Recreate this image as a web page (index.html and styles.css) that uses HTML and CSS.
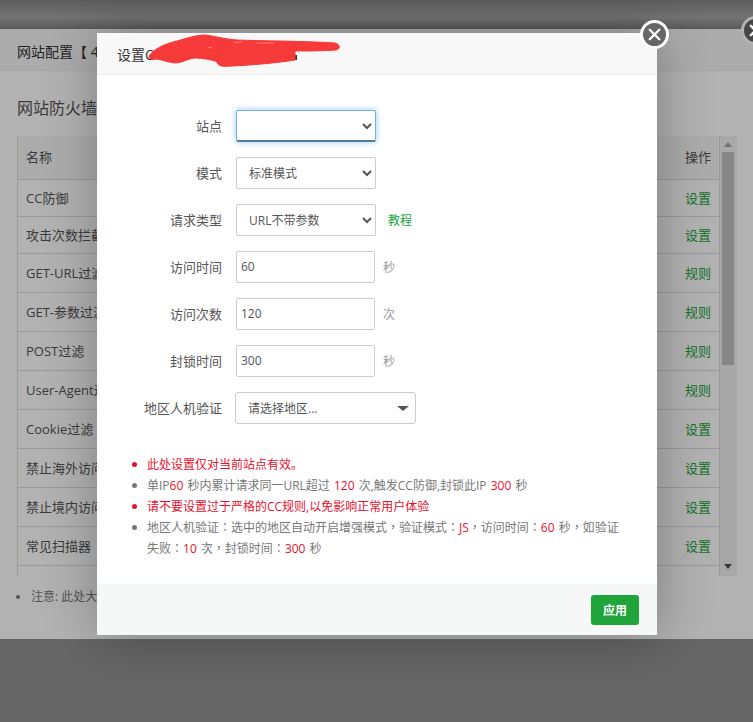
FILE: index.html
```html
<!DOCTYPE html>
<html lang="zh-CN">
<head>
<meta charset="utf-8">
<title>设置</title>
<link rel="stylesheet" href="styles.css">
</head>
<body>
<div class="page">
  <div class="top-band"></div>
  <section class="panel">
    <header class="panel-title">网站配置【 4</header>
    <div class="panel-body">
      <h2 class="section-title">网站防火墙</h2>
      <div class="table-wrap">
        <div class="table">
          <div class="row head"><span>名称</span><span>操作</span></div>
          <div class="row short"><span>CC防御</span><a>设置</a></div>
          <div class="row short"><span>攻击次数拦截</span><a>设置</a></div>
          <div class="row"><span>GET-URL过滤</span><a>规则</a></div>
          <div class="row"><span>GET-参数过滤</span><a>规则</a></div>
          <div class="row"><span>POST过滤</span><a>规则</a></div>
          <div class="row"><span>User-Agent过滤</span><a>规则</a></div>
          <div class="row"><span>Cookie过滤</span><a>设置</a></div>
          <div class="row"><span>禁止海外访问</span><a>设置</a></div>
          <div class="row"><span>禁止境内访问</span><a>设置</a></div>
          <div class="row"><span>常见扫描器</span><a>设置</a></div>
        </div>
        <div class="scrollbar">
          <i class="arrow-up"></i>
          <b class="thumb"></b>
          <i class="arrow-down"></i>
        </div>
      </div>
      <ul class="panel-note"><li>注意: 此处大</li></ul>
    </div>
  </section>
  <div class="page-rest"></div>
</div>

<div class="veil"></div>
<span class="close close-back"><svg viewBox="0 0 24 24"><path d="M7 7l10 10M17 7L7 17"/></svg></span>

<div class="dialog">
  <header class="dialog-title">设置C</header>
  <svg class="scribble" viewBox="0 0 200 40" width="200" height="40">
    <path class="speck" d="M150 22h5v5h-5zM55 15h5v5h-5z"/>
    <path class="ink" d="M7 23C12 16 22 11 35 8C45 5 55 2 63 2C72 3 82 6 95 7C120 8 165 8 193 10C198 11 199 16 194 17C180 18 165 18 153 18C153 22 153 25 153 27C135 30 110 32 90 33C80 34 76 33 75 29C72 27 60 25 52 25C46 26 42 29 34 30C28 30 22 27 14 26C10 27 7 26 7 23Z"/>
    <path class="slit" d="M92 9.500L100 9M114 10L132 10M66 15L70 14"/>
  </svg>
  <form class="dialog-body">
    <div class="field"><label>站点</label><select class="control focused"><option></option></select></div>
    <div class="field"><label>模式</label><select class="control"><option>标准模式</option></select></div>
    <div class="field"><label>请求类型</label><select class="control"><option>URL不带参数</option></select><a class="tutorial">教程</a></div>
    <div class="field"><label>访问时间</label><input class="control" value="60"><span class="unit">秒</span></div>
    <div class="field"><label>访问次数</label><input class="control" value="120"><span class="unit">次</span></div>
    <div class="field"><label>封锁时间</label><input class="control" value="300"><span class="unit">秒</span></div>
    <div class="field field-region"><label>地区人机验证</label><div class="region"><span>请选择地区...</span><i class="caret"></i></div></div>
    <ul class="notes">
      <li class="alert">此处设置仅对当前站点有效。</li>
      <li>单IP<em>60</em> 秒内累计请求同一URL超过 <em>120</em> 次,触发CC防御,封锁此IP <em>300</em> 秒</li>
      <li class="alert">请不要设置过于严格的CC规则,以免影响正常用户体验</li>
      <li class="centered-punct" lang="zh-TW">地区人机验证：选中的地区自动开启增强模式，验证模式：<em>JS</em>，访问时间：<em>60</em> 秒，如验证失败：<em>10</em> 次，封锁时间：<em>300</em> 秒</li>
    </ul>
  </form>
  <footer class="dialog-foot"><button type="button" class="apply">应用</button></footer>
</div>
<span class="close close-front"><svg viewBox="0 0 24 24"><path d="M7 7l10 10M17 7L7 17"/></svg></span>
</body>
</html>
```
FILE: styles.css
```css
* { box-sizing: border-box; }
html, body { margin: 0; padding: 0; height: 722px; overflow: hidden; }
body { font-family: "Open Sans", "Noto Sans CJK SC", sans-serif; font-size: 13px; color: #555; background: #939393; position: relative; width: 753px; }
.page { height: 722px; display: flex; flex-direction: column; }
.top-band { height: 29px; flex: none; background: linear-gradient(#868686, #a6a6a6 60%, #828282); }
.panel { height: 610px; flex: none; background: #fff; display: flex; flex-direction: column; }
.page-rest { flex: 1; }
.panel-title { height: 42px; flex: none; padding: 0 17px; line-height: 45px; font-size: 14px; color: #333; border-bottom: 1px solid #eee; background: #f7f7f7; }
.panel-body { padding: 0 16px 0 17px; }
.section-title { margin: 0; height: 65px; padding-top: 25px; font-size: 16px; line-height: 25px; font-weight: 400; color: #555; }
.table-wrap { display: flex; height: 440px; overflow: hidden; }
.table { width: 703px; flex: none; border-left: 1px solid #ddd; border-right: 1px solid #ddd; }
.row { height: 39px; display: flex; justify-content: space-between; align-items: center; padding: 0 8px 2px; border-bottom: 1px solid #ddd; color: #555; }
.row.short { height: 37px; }
.row.head { height: 44px; background: #f6f6f6; color: #555; }
.row a { color: #20a53a; }
.scrollbar { width: 17px; background: #f1f1f1; display: flex; flex-direction: column; align-items: center; padding: 0 1px 0 0; position: relative; }
.thumb { width: 12px; height: 213px; background: #c1c1c1; }
.arrow-up { width: 0; height: 0; margin: 6px 0 5px; border: 4px solid transparent; border-top: 0; border-bottom: 5px solid #a3a3a3; }
.arrow-down { width: 0; height: 0; position: absolute; bottom: 7px; border: 4px solid transparent; border-bottom: 0; border-top: 5px solid #505050; }
.panel-note { margin: 12px 0 0; padding: 0 0 0 14px; font-size: 12px; color: #777; line-height: 18px; }

.veil { position: absolute; inset: 0; background: rgba(0, 0, 0, .3); }

.close { position: absolute; width: 29px; height: 29px; border-radius: 50%; background: #666; border: 3px solid #fff; display: block; }
.close svg { display: block; width: 23px; height: 23px; fill: none; stroke: #fff; stroke-width: 2.4; stroke-linecap: round; }
.close-front { left: 640px; top: 20px; }
.close-back { left: 741px; top: 16px; background: #474747; border-color: #b3b3b3; }

.dialog { position: absolute; left: 97px; top: 33px; width: 560px; height: 602px; background: #fff; display: flex; flex-direction: column; box-shadow: 1px 1px 50px rgba(0, 0, 0, .3); }
.dialog-title { height: 42px; flex: none; padding: 0 20px; font-size: 14px; line-height: 43px; color: #333; background: #f8f8f8; border-bottom: 1px solid #eee; }
.scribble { position: absolute; left: 45px; top: 0; overflow: visible; }
.ink { fill: #f63a3a; stroke: #f63a3a; stroke-width: 1; stroke-linejoin: round; }
.speck { fill: #333; }
.slit { fill: none; stroke: #fb7a7a; stroke-width: 1; }
.dialog-body { flex: 1; padding: 35px 36px 0 0; }
.field { display: flex; align-items: center; height: 32px; margin-bottom: 15px; }
.field label { width: 125px; flex: none; margin-right: 14px; padding-bottom: 2px; text-align: right; color: #555; }
.control { width: 139px; height: 32px; padding: 0 10px 0 12px; border: 1px solid #ccc; border-radius: 2px; background: #fff; font: 12px "Open Sans", "Noto Sans CJK SC", sans-serif; color: #555; outline: none; }
input.control { padding: 0 0 2px 4px; }
select.control { width: 140px; padding-left: 8px; }
.focused { border-color: #72b3e0; border-bottom: 2px solid #527c9e; box-shadow: 0 0 6px rgba(102, 175, 233, .7); }
.unit { margin-left: 8px; font-size: 12px; color: #999; }
.tutorial { margin-left: 12px; font-size: 12px; color: #20a53a; }
.field-region label { margin-right: 13px; }
.region { width: 181px; height: 32px; border: 1px solid #ccc; border-radius: 3px; padding: 0 10px 0 12px; display: flex; align-items: center; justify-content: space-between; font-size: 12px; color: #555; }
.caret { width: 0; height: 0; border: 6px solid transparent; border-bottom: 0; border-top: 5px solid #555; margin-right: -4px; }
.notes { list-style: none; margin: 30px 0 0; padding: 0 0 0 50px; font-size: 12px; line-height: 21px; color: #777; word-spacing: 1px; }
.notes li { position: relative; }
.notes li::before { content: ""; position: absolute; left: -15px; top: 8px; width: 5px; height: 5px; border-radius: 50%; background: #777; }
.notes li.alert { color: #e8112d; }
.notes li.alert::before { background: #e8112d; }
.notes li.centered-punct { font-family: "Open Sans", "Noto Sans CJK TC", sans-serif; }
.notes em { font-style: normal; color: #e8112d; }
.dialog-foot { height: 51px; flex: none; padding: 11px 18px 0 0; display: flex; justify-content: flex-end; align-items: flex-start; background: #f6f8f8; }
.apply { width: 48px; height: 30px; padding: 0; border: 0; border-radius: 3px; background: #20a53a; color: #fff; font: 700 12px "Open Sans", "Noto Sans CJK SC", sans-serif; }
```
